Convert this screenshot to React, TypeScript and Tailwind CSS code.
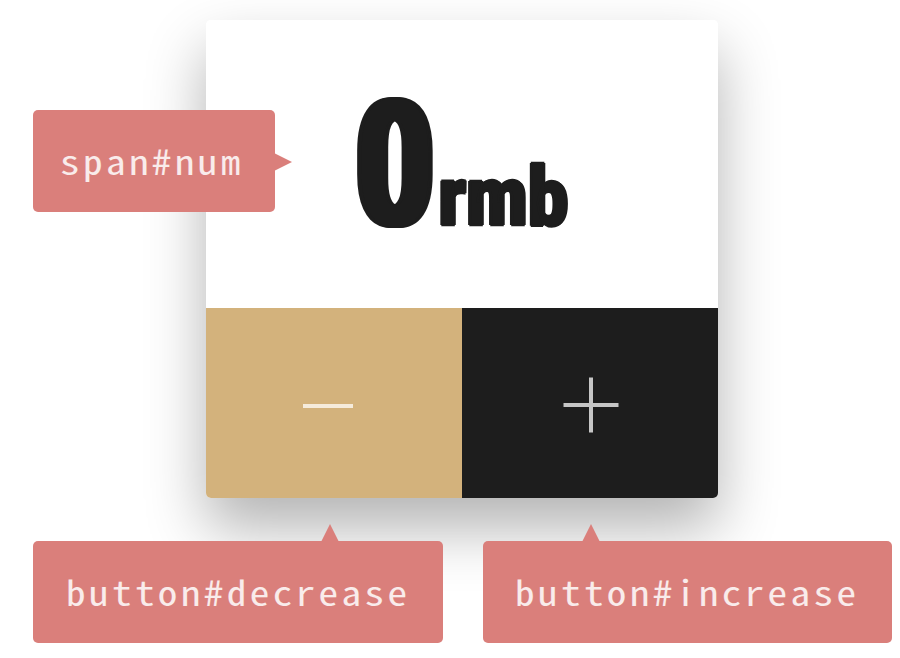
function Label({ text, className }: { text: string; className: string }) {
  return (
    <div
      className={`flex h-[102px] items-center rounded-[5px] bg-[#da7f7b] pb-[3px] font-['Noto_Sans_Mono_CJK_SC','DejaVu_Sans_Mono',monospace] text-[35px] leading-none tracking-[3px] text-white/85 ${className}`}
    >
      <span className="origin-left scale-x-[1.12] whitespace-pre">{text}</span>
    </div>
  );
}

function UpArrow({ className }: { className: string }) {
  return (
    <svg viewBox="0 0 18 18" className={`absolute -top-[17px] h-[18px] w-[18px] fill-[#da7f7b] ${className}`}>
      <path d="M9 0L18 18H0Z" />
    </svg>
  );
}

export default function App() {
  return (
    <main className="relative h-[658px] w-[900px] overflow-hidden bg-white pt-5">
      <section className="ml-[206px] flex h-[478px] w-[512px] flex-col rounded-[5px] shadow-[0_30px_60px_rgba(0,0,0,0.3)]">
        <div className="flex h-72 items-start rounded-t-[5px] bg-white pl-[150px] font-[Roboto,sans-serif] font-black text-[#1d1d1d]">
          <div className="flex h-72 w-[83px] shrink-0">
            <span className="origin-top-left scale-x-[0.75] pt-[55px] text-[179px] leading-[180px] [text-shadow:-6px_0_#1d1d1d,-4px_0_#1d1d1d,-2px_0_#1d1d1d,2px_0_#1d1d1d,4px_0_#1d1d1d,6px_0_#1d1d1d]">
              0
            </span>
          </div>
          <span className="origin-top-left scale-x-[0.83] pt-[127px] text-[84px] leading-[100px] tracking-[1.8px] [-webkit-text-stroke:2.5px_#1d1d1d] [text-shadow:-2.5px_0_#1d1d1d,-1px_0_#1d1d1d,1px_0_#1d1d1d,2.5px_0_#1d1d1d]">
            rmb
          </span>
        </div>
        <div className="grid h-[190px] grid-cols-2 overflow-hidden rounded-b-[5px]">
          <button aria-label="decrease" className="flex items-center bg-[#d3b27c] pl-[97px]">
            <svg viewBox="0 0 50 4" className="mt-[5px] h-1 w-[50px] fill-[#f5ebdb]">
              <rect width="50" height="4" />
            </svg>
          </button>
          <button aria-label="increase" className="flex items-center bg-[#1d1d1d] pl-[101px]">
            <svg viewBox="0 0 56 56" className="mt-[3px] h-14 w-14 fill-[#c6c6c6]">
              <path d="M26 0.5h4v25.5h25.5v4H30v25.5h-4V30H0.5v-4H26Z" />
            </svg>
          </button>
        </div>
      </section>

      <div className="absolute top-[110px] left-[33px]">
        <Label text="span#num" className="w-[242px] pl-[27px]" />
        <svg viewBox="0 0 18 18" className="absolute top-[43px] left-[241px] h-[18px] w-[18px] fill-[#da7f7b]">
          <path d="M0 0L18 9L0 18Z" />
        </svg>
      </div>

      <div className="mt-[43px] ml-[33px] flex gap-10">
        <div className="relative">
          <UpArrow className="left-[288px]" />
          <Label text="button#decrease" className="w-[410px] pl-[33px]" />
        </div>
        <div className="relative">
          <UpArrow className="left-[99px]" />
          <Label text="button#increase" className="w-[409px] pl-[32px]" />
        </div>
      </div>
    </main>
  );
}
